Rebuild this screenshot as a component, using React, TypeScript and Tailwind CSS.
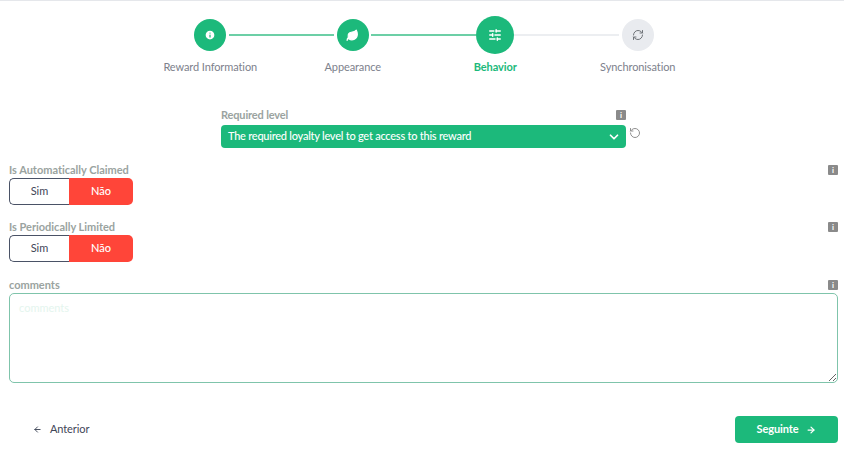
import { ArrowLeft, ArrowRight, ChevronDown, Info, Leaf, RefreshCw, RotateCcw, SlidersHorizontal } from "lucide-react";
import type { ReactNode } from "react";

function InfoBadge() {
  return (
    <span className="flex h-[10px] w-[10px] items-center justify-center rounded-[1px] bg-[#8a8a8a] text-[8px] font-bold leading-none text-white">
      i
    </span>
  );
}

function Step({ icon, label, active, done }: { icon: ReactNode; label: string; active?: boolean; done?: boolean }) {
  return (
    <div className="flex w-[142.5px] shrink-0 flex-col items-center">
      <div className="flex h-[38px] items-center justify-center">
        <div
          className={
            active
              ? "flex h-[38px] w-[38px] items-center justify-center rounded-full bg-[#1cb97b] text-white"
              : done
                ? "flex h-[32px] w-[32px] items-center justify-center rounded-full bg-[#1cb97b] text-white"
                : "flex h-[32px] w-[32px] items-center justify-center rounded-full bg-[#e9ebef] text-[#6f7378]"
          }
        >
          {icon}
        </div>
      </div>
      <span className={active ? "mt-[6px] text-[11px] font-bold leading-[14px] tracking-[-0.1px] text-[#1cb97b]" : "mt-[6px] text-[11px] leading-[14px] tracking-[-0.1px] text-[#7d818c]"}>
        {label}
      </span>
    </div>
  );
}

function YesNo({ label }: { label: string }) {
  return (
    <div>
      <div className="flex items-center justify-between">
        <span className="text-[11px] font-bold leading-[14px] tracking-[-0.02px] text-[#9aa3a0]">{label}</span>
        <InfoBadge />
      </div>
      <div className="mt-[1px] flex h-[27px] w-[124px] text-[11px]">
        <div className="flex w-[60px] items-center justify-center rounded-l-[5px] border border-r-0 border-[#4a5266] bg-white text-[#3f4658]">Sim</div>
        <div className="flex w-[64px] items-center justify-center rounded-r-[5px] bg-[#ff4539] font-medium text-white">Não</div>
      </div>
    </div>
  );
}

export default function App() {
  return (
    <div className="h-[453px] w-[844px] overflow-hidden border-t border-[#e5e7eb] bg-white font-['Lato','Noto_Sans',sans-serif]">
      {/* stepper */}
      <div className="relative ml-[139px] mt-[15px] flex w-[570px]">
        <div className="absolute left-[90px] top-[18px] h-[2px] w-[105px] bg-[#6ccfa6]" />
        <div className="absolute left-[232px] top-[18px] h-[2px] w-[105px] bg-[#6ccfa6]" />
        <div className="absolute left-[375px] top-[18px] h-[2px] w-[105px] bg-[#eceef1]" />
        <Step done label="Reward Information" icon={<Info size={12} fill="white" stroke="#1cb97b" strokeWidth={2.5} />} />
        <Step done label="Appearance" icon={<Leaf size={13} fill="white" strokeWidth={2} />} />
        <Step active label="Behavior" icon={<SlidersHorizontal size={14} strokeWidth={2.5} />} />
        <Step label="Synchronisation" icon={<RefreshCw size={12} strokeWidth={2} />} />
      </div>

      {/* required level */}
      <div className="ml-[221px] mt-[34px] w-[405px]">
        <div className="flex items-center justify-between">
          <span className="text-[11px] font-bold leading-[14px] tracking-[-0.15px] text-[#9aa3a0]">Required level</span>
          <InfoBadge />
        </div>
        <div className="relative mt-[3px] flex h-[23px] items-center justify-between rounded-[4px] bg-[#1cb97b] pl-[7px] pr-[5px] text-[11px] font-medium tracking-[-0.24px] text-white">
          The required loyalty level to get access to this reward
          <ChevronDown size={14} strokeWidth={3} />
          <RotateCcw size={12} className="absolute -right-[15px] top-[2px] text-[#8f8f8f]" />
        </div>
      </div>

      {/* form fields */}
      <div className="ml-[9px] mr-[6px] mt-[15px] flex flex-col gap-[15px]">
        <YesNo label="Is Automatically Claimed" />
        <YesNo label="Is Periodically Limited" />
      </div>
      <div className="ml-[9px] mr-[6px] mt-[16px]">
        <div className="flex items-center justify-between">
          <span className="text-[11px] font-bold leading-[14px] tracking-[-0.02px] text-[#9aa3a0]">comments</span>
          <InfoBadge />
        </div>
        <textarea
          placeholder="comments"
          className="mt-[1px] block h-[90px] w-full rounded-[5px] border border-[#7fc4ab] px-[9px] py-[6px] text-[11px] placeholder:text-[#e4f5ee]"
        />
      </div>

      {/* footer */}
      <div className="ml-[9px] mr-[6px] mt-[33px] flex items-center justify-between">
        <button className="flex items-center gap-[8px] pl-[24px] text-[11px] tracking-[-0.1px] text-[#3f4658]">
          <ArrowLeft size={9} strokeWidth={2.5} />
          Anterior
        </button>
        <button className="flex h-[27px] w-[103px] items-center justify-center gap-[8px] rounded-[4px] bg-[#1cb97b] text-[11px] font-bold tracking-[-0.1px] text-white">
          Seguinte
          <ArrowRight size={10} strokeWidth={3} />
        </button>
      </div>
    </div>
  );
}
